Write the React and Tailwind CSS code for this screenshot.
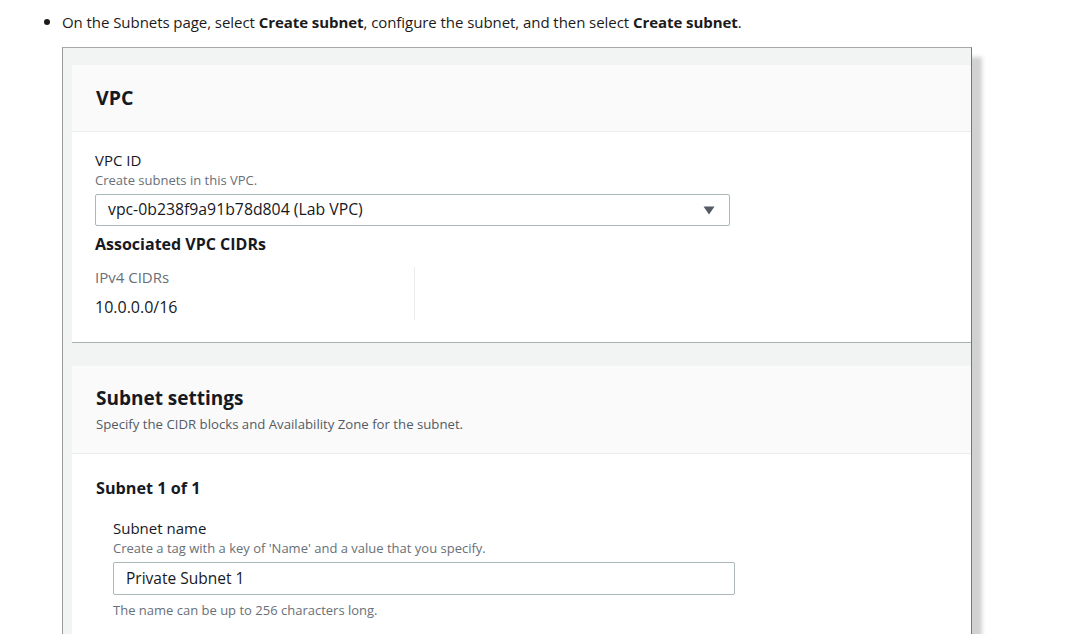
import React from 'react'

const ember = { fontFamily: '"Open Sans", "Noto Sans", Arial, sans-serif' }

function CaretDown() {
  return (
    <svg width="12" height="9" viewBox="0 0 12 9" className="shrink-0">
      <path d="M0.5 0.5 H11.5 L6 8.5 Z" fill="#545b64" />
    </svg>
  )
}

export default function App() {
  return (
    <div className="w-[1083px] h-[634px] overflow-hidden bg-white" style={{ fontFamily: '"Open Sans", "Noto Sans", sans-serif' }}>
      {/* instruction line */}
      <div className="flex items-center h-[44px] pl-[44px] text-[15px] text-[#1b1b1b] tracking-[-0.06px]">
        <span className="w-[6px] h-[6px] rounded-full bg-[#1b1b1b] mr-[12px]" />
        <span>
          On the Subnets page, select <b>Create subnet</b>, configure the subnet, and then select <b>Create subnet</b>.
        </span>
      </div>

      {/* screenshot frame */}
      <div
        className="ml-[62px] mt-[3px] w-[910px] h-[700px] bg-[#f2f3f3] border-t border-l border-r border-t-[#a8a8a8] border-l-[#9a9a9a] border-r-[#777] pl-[9px] pt-[17px] shadow-[10px_10px_4px_rgba(0,0,0,0.18)]"
        style={ember}
      >
        {/* VPC card */}
        <div className="bg-white border-b border-[#a9b3b4]">
          <div className="h-[67px] bg-[#fafafa] border-b border-[#eaeded] flex items-center pl-[24px]">
            <h2 className="text-[19.5px] font-bold text-[#16191f]">VPC</h2>
          </div>
          <div className="pl-[23px] pt-[18px] pb-[22px]">
            <div className="text-[15px] leading-[20px] text-[#16191f]">VPC ID</div>
            <div className="mt-[2px] text-[13px] leading-[16px] text-[#687078]">Create subnets in this VPC.</div>
            <div className="mt-[6px] w-[635px] h-[32px] border border-[#aab7b8] rounded-[2px] flex items-center justify-between pl-[12px] pr-[14px]">
              <span className="text-[15.8px] text-[#16191f]">vpc-0b238f9a91b78d804 (Lab VPC)</span>
              <CaretDown />
            </div>
            <div className="mt-[8px] text-[16px] leading-[20px] font-bold text-[#16191f]">Associated VPC CIDRs</div>
            <div className="mt-[13px] w-[320px] border-r border-[#eaeded] pb-[3px]">
              <div className="text-[15px] leading-[20px] text-[#687078]">IPv4 CIDRs</div>
              <div className="mt-[10px] text-[16px] leading-[20px] text-[#16191f]">10.0.0.0/16</div>
            </div>
          </div>
        </div>

        {/* Subnet settings card */}
        <div className="mt-[23px] bg-white pb-[80px]">
          <div className="h-[88px] bg-[#fafafa] border-b border-[#eaeded] pl-[24px] pt-[19px]">
            <h2 className="text-[19px] leading-[26px] font-bold text-[#16191f]">Subnet settings</h2>
            <p className="mt-[4px] text-[13.2px] leading-[18px] text-[#545b64]">Specify the CIDR blocks and Availability Zone for the subnet.</p>
          </div>
          <div className="pl-[24px] pt-[24px]">
            <div className="text-[16.2px] leading-[20px] font-bold text-[#16191f]">Subnet 1 of 1</div>
            <div className="pl-[17px] mt-[20px]">
              <div className="text-[15px] leading-[20px] text-[#16191f]">Subnet name</div>
              <div className="mt-[2px] text-[13px] leading-[16px] text-[#687078]">Create a tag with a key of 'Name' and a value that you specify.</div>
              <div className="mt-[6px] w-[622px] h-[33px] border border-[#aab7b8] rounded-[2px] flex items-center pl-[12px]">
                <span className="text-[15.5px] text-[#16191f]">Private Subnet 1</span>
              </div>
              <div className="mt-[6px] text-[13px] leading-[18px] text-[#687078]">The name can be up to 256 characters long.</div>
            </div>
          </div>
        </div>
      </div>
    </div>
  )
}
